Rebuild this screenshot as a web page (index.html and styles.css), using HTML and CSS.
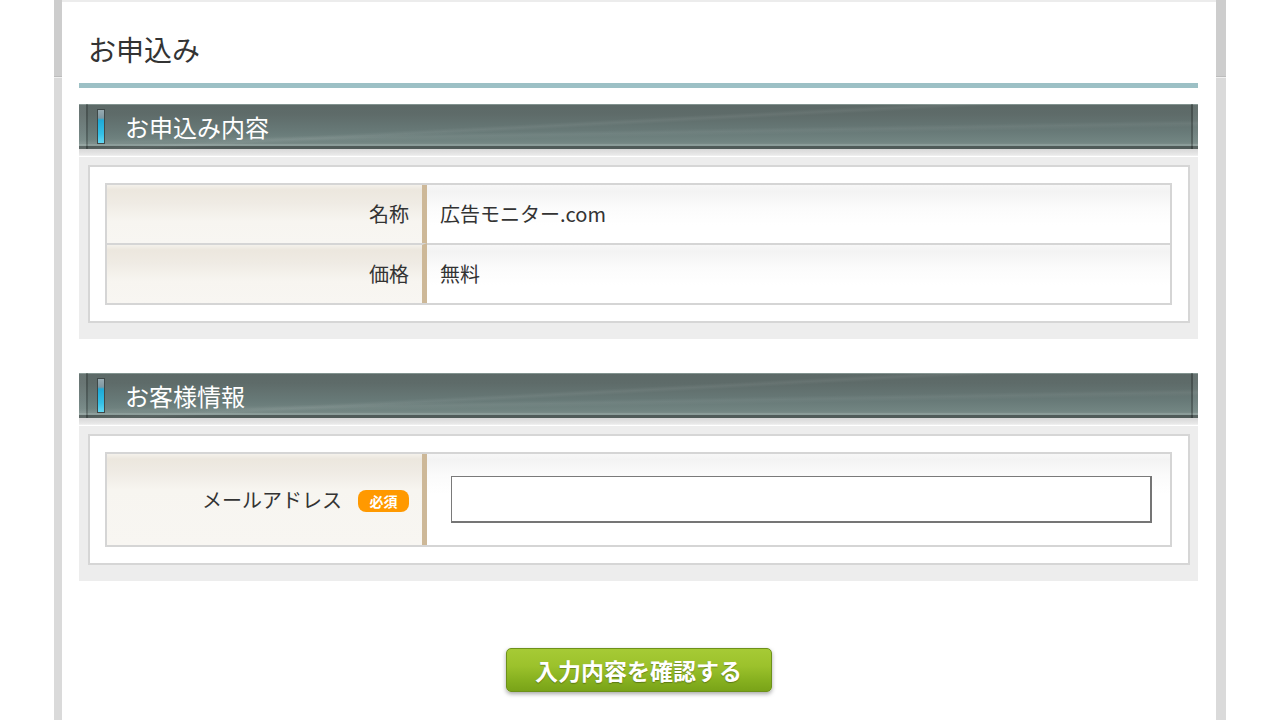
FILE: index.html
```html
<!DOCTYPE html>
<html lang="ja">
  <head>
    <meta charset="UTF-8" />
    <meta name="viewport" content="width=device-width, initial-scale=1.0" />
    <title>お申込み</title>
    <link rel="stylesheet" href="styles.css">
  </head>
  <body>
    <div class="frame">
      <div class="page">
        <h1 class="page-title">お申込み</h1>

        <div class="block">
          <h2 class="block-head"><span class="mark"></span>お申込み内容</h2>
          <div class="block-body">
            <div class="box">
              <table class="form-table">
                <tr>
                  <th>名称</th>
                  <td>広告モニター.com</td>
                </tr>
                <tr>
                  <th>価格</th>
                  <td>無料</td>
                </tr>
              </table>
            </div>
          </div>
        </div>

        <div class="block block-second">
          <h2 class="block-head"><span class="mark"></span>お客様情報</h2>
          <div class="block-body">
            <div class="box">
              <table class="form-table">
                <tr class="tall">
                  <th>メールアドレス<span class="required">必須</span></th>
                  <td class="field"><input type="text" class="mail-input" /></td>
                </tr>
              </table>
            </div>
          </div>
        </div>

        <div class="actions">
          <button class="submit">入力内容を確認する</button>
        </div>
      </div>
    </div>
  </body>
</html>
```

FILE: styles.css
```css
html,
body {
  margin: 0;
  overflow: hidden;
}

body {
  background: #fff;
  color: #333;
  font-family: "Noto Sans CJK JP", "Liberation Sans", sans-serif;
}

.frame {
  width: 1154px;
  margin-left: 54px;
  padding: 0 10px 0 8px;
  min-height: 720px;
  background: linear-gradient(#cdcdcd 0, #cdcdcd 76px, #bcbcbc 76px, #bcbcbc 77px, #f0f0f0 77px, #f0f0f0 78px, #dadada 78px);
}

.page {
  background: #fff;
  border-top: 2px solid #ececec;
  padding: 0 18px 0 17px;
  min-height: 718px;
}

.page-title {
  margin: 0;
  padding: 33px 0 20px 9px;
  font-size: 28px;
  line-height: 28px;
  font-weight: normal;
  color: #333;
  border-bottom: 5px solid #9cc0c5;
}

.block {
  margin-top: 16px;
}

.block-second {
  margin-top: 34px;
}

.block-head {
  margin: 0;
  height: 45px;
  box-sizing: border-box;
  display: flex;
  align-items: center;
  padding-left: 18px;
  color: #fff;
  font-size: 24px;
  font-weight: normal;
  background:
    linear-gradient(90deg, rgba(255, 255, 255, 0.07) 0, rgba(255, 255, 255, 0.07) 7px, rgba(0, 0, 0, 0.22) 7px, rgba(0, 0, 0, 0.22) 9px, transparent 9px, transparent calc(100% - 7px), rgba(0, 0, 0, 0.25) calc(100% - 7px), rgba(0, 0, 0, 0.25) calc(100% - 5px), rgba(255, 255, 255, 0.06) calc(100% - 5px)),
    linear-gradient(177deg, transparent 0, transparent 42%, rgba(255, 255, 255, 0.06) 45%, transparent 48%),
    linear-gradient(179deg, transparent 0, transparent 55%, rgba(255, 255, 255, 0.05) 60%, transparent 66%),
    linear-gradient(#82938f 0, #82938f 1px, #5c6967 1px, #5e6b69 10px, #687a78 28px, #728582 38px, #7a8b88 40px, #8b9c99 40px, #8b9c99 42px, #505b59 42px);
}

.mark {
  width: 8px;
  height: 35px;
  box-sizing: border-box;
  margin-right: 20px;
  border: 1px solid #3e4848;
  background: linear-gradient(#98abb2 0, #7f98a2 8px, #1ea9d6 10px, #34c0e6 24px, #64d8f2 100%);
}

.block-body {
  padding: 16px 8px 16px 9px;
  background: linear-gradient(#d8d8d8 0, #e9e9e9 6px, #f4f4f4 7px, #fff 7px, #fff 8px, #ededed 8px);
}

.box {
  background: #fff;
  border: 2px solid #d6d6d6;
  padding: 16px 16px 16px 15px;
}

.form-table {
  width: 100%;
  border-collapse: separate;
  border-spacing: 0;
  border: 2px solid #d5d5d5;
}

.form-table th,
.form-table td {
  height: 58px;
  padding: 0;
  font-size: 20px;
  line-height: 24px;
}

.form-table tr + tr th,
.form-table tr + tr td {
  border-top: 2px solid #d5d5d5;
}

.form-table th {
  width: 302px;
  padding-right: 13px;
  text-align: right;
  font-weight: normal;
  color: #333;
  border-right: 5px solid #cdb898;
  background: linear-gradient(#f4f1eb 0, #ece7de 5px, #efebe4 18px, #f7f5f0 36px, #f8f6f2 100%);
}

.form-table td {
  padding-left: 13px;
  background: linear-gradient(#f7f7f7 0, #f3f3f3 6px, #fbfbfb 22px, #fff 40px);
}

.form-table .tall th,
.form-table .tall td {
  height: 91px;
}

.form-table td.field {
  padding-left: 24px;
}

.required {
  display: inline-block;
  width: 51px;
  height: 22px;
  margin-left: 16px;
  border-radius: 8px;
  background: #ff9900;
  color: #fff;
  font-size: 14px;
  font-weight: bold;
  line-height: 22px;
  text-align: center;
  vertical-align: 1px;
}

.mail-input {
  display: block;
  width: 701px;
  height: 47px;
  box-sizing: border-box;
  margin: 0;
  padding: 0 8px;
  background: #fff;
  border-top: 1px solid #7a7a7a;
  border-left: 1px solid #7a7a7a;
  border-right: 2px solid #757575;
  border-bottom: 2px solid #757575;
  font-size: 18px;
}

.actions {
  padding-top: 67px;
  text-align: center;
}

.submit {
  width: 266px;
  height: 44px;
  padding: 0;
  border: 1px solid #6d911a;
  border-radius: 5px;
  background: linear-gradient(#a6ca35 0, #9cc22c 40%, #86b01f 75%, #79a318 100%);
  color: #fff;
  font-family: "Noto Sans CJK JP", sans-serif;
  font-size: 23px;
  font-weight: bold;
  text-shadow: 0 1px 1px rgba(0, 0, 0, 0.3);
  box-shadow: 0 2px 4px rgba(0, 0, 0, 0.35);
  cursor: pointer;
}
```
